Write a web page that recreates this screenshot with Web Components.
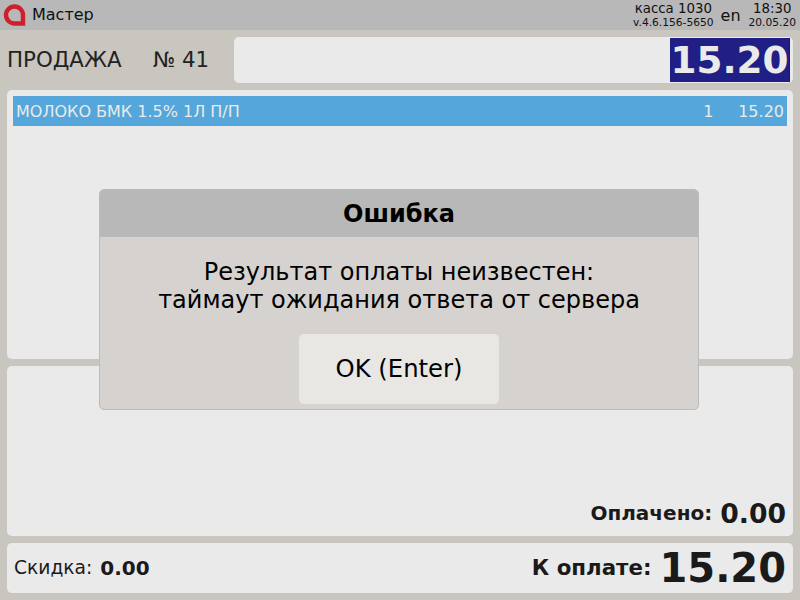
<!DOCTYPE html>
<html>
<head>
<meta charset="utf-8">
<title>Master</title>
<style>
  html, body { margin: 0; height: 100%; }
  body { font-family: "DejaVu Sans", sans-serif; background: #c9c6c0; color: #1a1a1a; overflow: hidden; }
</style>
</head>
<body>
<pos-app></pos-app>
<script>
class PosTopbar extends HTMLElement {
  constructor () {
    super()
    this.attachShadow({ mode: 'open' }).innerHTML = `
    <style>
      :host { display: flex; align-items: center; height: 30px; background: #b8b8b8; color: #111; }
      svg { width: 23px; height: 22px; margin: 0 6px 0 3px; flex: none; }
      .title { font-size: 16px; flex: 1; padding-bottom: 2px; }
      .kassa { display: flex; flex-direction: column; align-items: center; }
      .kassa b { font-weight: normal; font-size: 13.33px; line-height: 15px; }
      .kassa small { font-size: 10.67px; line-height: 13px; }
      .lang { font-size: 16px; margin: 0 8px 0 7px; }
      .time { display: flex; flex-direction: column; align-items: center; margin-right: 4px; }
      .time b { font-weight: normal; font-size: 13.33px; line-height: 15px; }
      .time small { font-size: 10.67px; line-height: 13px; }
    </style>
    <svg viewBox="0 0 23 22"><path fill="none" stroke="#cf1f2d" stroke-width="4.4" d="M20 19.5H11.5A8.5 8.5 0 1 1 20 11Z"/></svg>
    <span class="title">Мастер</span>
    <div class="kassa"><b>касса 1030</b><small>v.4.6.156-5650</small></div>
    <span class="lang">en</span>
    <div class="time"><b>18:30</b><small>20.05.20</small></div>
    `
  }
}
customElements.define('pos-topbar', PosTopbar)

class PosHeader extends HTMLElement {
  constructor () {
    super()
    this.attachShadow({ mode: 'open' }).innerHTML = `
    <style>
      :host { display: flex; align-items: center; height: 46px; margin: 7px 7px 0 7px; font-size: 21.33px; color: #222; }
      .sale { width: 146px; padding-bottom: 2px; }
      .num { width: 81px; padding-bottom: 2px; }
      .total { flex: 1; height: 100%; box-sizing: border-box; background: #eaeaea; border-radius: 5px; display: flex; justify-content: flex-end; padding: 1px 3px 1px 0; }
      .total span { background: #1f1f85; color: #eaeaea; font-size: 37.33px; font-weight: bold; width: 120px; box-sizing: border-box; border-right: 1px solid #222; text-align: center; line-height: 44px; }
    </style>
    <span class="sale">ПРОДАЖА</span>
    <span class="num">№ 41</span>
    <div class="total"><span>15.20</span></div>
    `
  }
}
customElements.define('pos-header', PosHeader)

class PosPanel extends HTMLElement {
  constructor () {
    super()
    this.attachShadow({ mode: 'open' }).innerHTML = `
    <style>
      :host { display: flex; flex-direction: column; box-sizing: border-box; background: #eaeaea; border-radius: 5px; margin: 7px 7px 0 7px; }
    </style>
    <slot></slot>
    `
  }
}
customElements.define('pos-panel', PosPanel)

class PosRow extends HTMLElement {
  constructor () {
    super()
    this.attachShadow({ mode: 'open' }).innerHTML = `
    <style>
      :host { display: flex; align-items: center; height: 30px; margin: 6px 6px 0 6px; padding: 0 3px; background: #55a6da; color: #eaeaea; font-size: 16px; }
      .name { flex: 1; }
      .qty { width: 35px; }
    </style>
    <span class="name"><slot name="name"></slot></span>
    <span class="qty"><slot name="qty"></slot></span>
    <span><slot name="sum"></slot></span>
    `
  }
}
customElements.define('pos-row', PosRow)

class PosAmount extends HTMLElement {
  constructor () {
    super()
    this.attachShadow({ mode: 'open' }).innerHTML = `
    <style>
      :host { display: inline-flex; align-items: center; gap: 8px; color: #1a1a1a; white-space: nowrap; }
      .label { font-size: var(--label-size, 20px); font-weight: var(--label-weight, bold); padding-bottom: 2px; }
      .value { font-size: var(--value-size, 26.67px); font-weight: bold; }
    </style>
    <span class="label"><slot name="label"></slot></span>
    <span class="value"><slot name="value"></slot></span>
    `
  }
}
customElements.define('pos-amount', PosAmount)

class PosDialog extends HTMLElement {
  constructor () {
    super()
    this.attachShadow({ mode: 'open' }).innerHTML = `
    <style>
      :host { position: absolute; left: 99px; top: 189px; width: 600px; height: 221px; box-sizing: border-box; display: flex; flex-direction: column; background: #d5d2cf; border: 1px solid #bbb; border-radius: 5px; overflow: hidden; color: #000; }
      header { height: 47px; background: #b8b8b8; display: flex; align-items: center; justify-content: center; font-size: 24px; font-weight: bold; flex: none; }
      .msg { text-align: center; font-size: 24px; line-height: 28px; margin-top: 21px; flex: 1; }
      button { align-self: center; width: 200px; height: 70px; margin-bottom: 5px; padding: 0 0 2px; border: none; border-radius: 5px; background: #e8e7e4; font: inherit; font-size: 24.3px; color: #000; }
    </style>
    <header><slot name="title"></slot></header>
    <div class="msg"><slot></slot></div>
    <button><slot name="action"></slot></button>
    `
  }
}
customElements.define('pos-dialog', PosDialog)

class PosApp extends HTMLElement {
  constructor () {
    super()
    this.attachShadow({ mode: 'open' }).innerHTML = `
    <style>
      :host { display: flex; flex-direction: column; height: 600px; position: relative; }
      .items { height: 269px; }
      .payments { height: 170px; justify-content: flex-end; align-items: flex-end; padding: 0 7px 7px 0; }
      .footer { height: 50px; flex-direction: row; align-items: center; justify-content: space-between; padding: 0 7px; }
      .disc { --label-size: 18.67px; --label-weight: normal; --value-size: 20px; }
      .due { --label-size: 21.33px; --value-size: 40px; }
    </style>
    <pos-topbar></pos-topbar>
    <pos-header></pos-header>
    <pos-panel class="items">
      <pos-row>
        <span slot="name">МОЛОКО БМК 1.5% 1Л П/П</span>
        <span slot="qty">1</span>
        <span slot="sum">15.20</span>
      </pos-row>
    </pos-panel>
    <pos-panel class="payments">
      <pos-amount><span slot="label">Оплачено:</span><span slot="value">0.00</span></pos-amount>
    </pos-panel>
    <pos-panel class="footer">
      <pos-amount class="disc"><span slot="label">Скидка:</span><span slot="value">0.00</span></pos-amount>
      <pos-amount class="due"><span slot="label">К оплате:</span><span slot="value">15.20</span></pos-amount>
    </pos-panel>
    <pos-dialog>
      <span slot="title">Ошибка</span>
      Результат оплаты неизвестен:<br>таймаут ожидания ответа от сервера
      <span slot="action">OK (Enter)</span>
    </pos-dialog>
    `
  }
}
customElements.define('pos-app', PosApp)
</script>
</body>
</html>
